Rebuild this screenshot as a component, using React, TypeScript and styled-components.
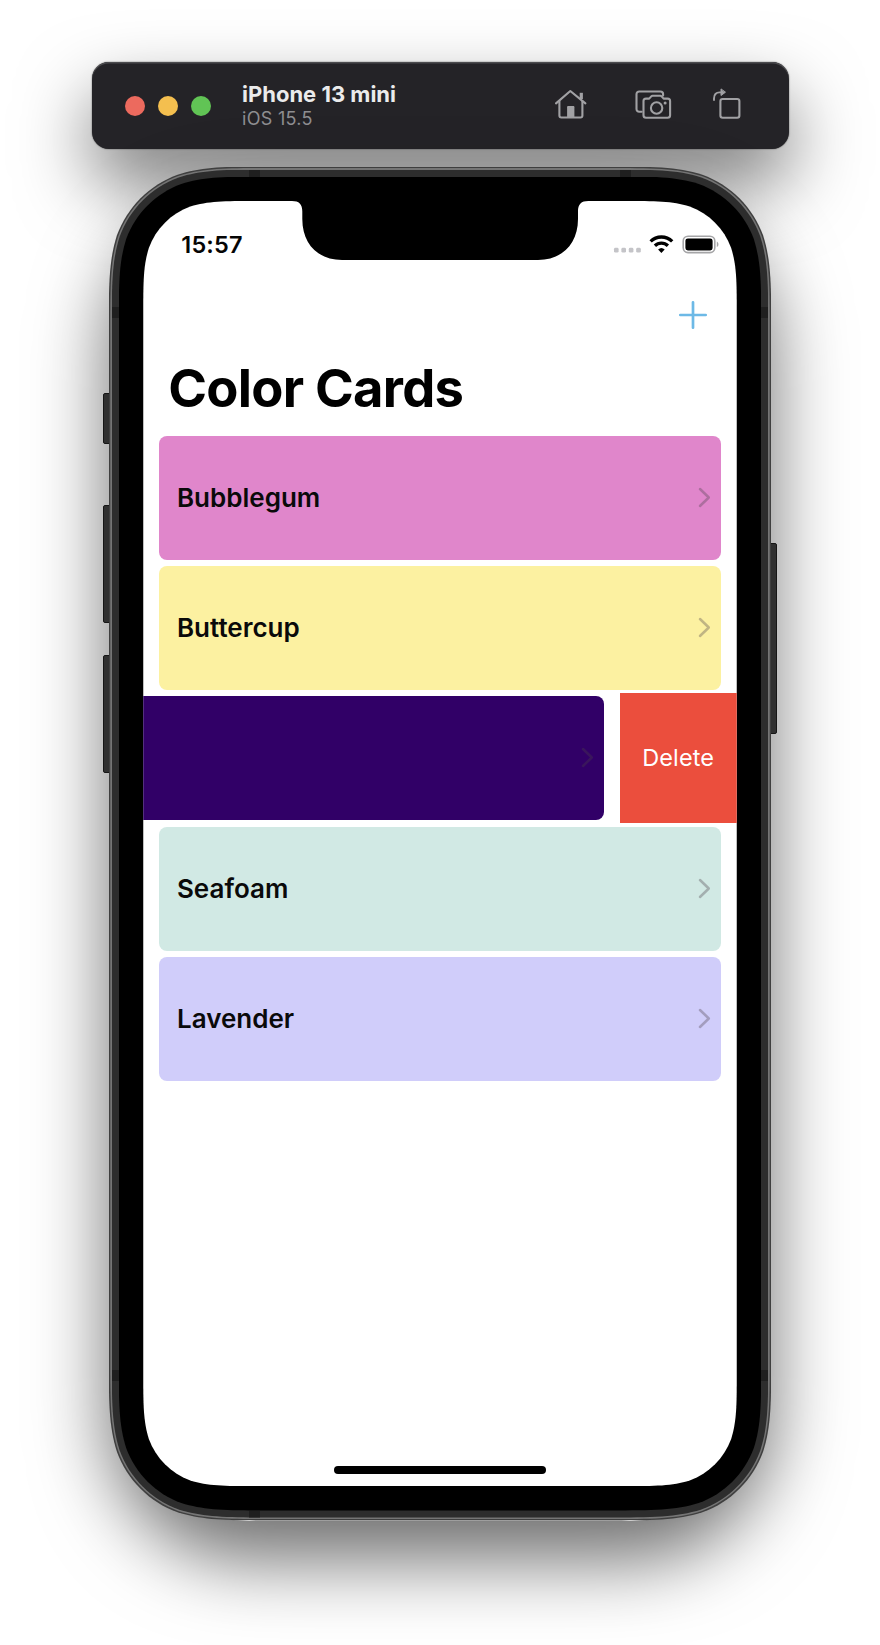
import React from "react";
import styled, { createGlobalStyle } from "styled-components";

/** Rounded rectangle with continuous-curvature corners, as a CSS path. */
function smoothRect(w: number, h: number, r: number): string {
  const a = 1.528665 * r;
  const b = 1.088493 * r;
  const c = 0.868407 * r;
  const d = 0.631494 * r;
  const e = 0.074911 * r;
  const f = 0.372824 * r;
  const g = 0.16906 * r;
  return [
    `M${a} 0 L${w - a} 0`,
    `C${w - b} 0 ${w - c} 0 ${w - d} ${e}`,
    `C${w - f} ${g} ${w - g} ${f} ${w - e} ${d}`,
    `C${w} ${c} ${w} ${b} ${w} ${a}`,
    `L${w} ${h - a}`,
    `C${w} ${h - b} ${w} ${h - c} ${w - e} ${h - d}`,
    `C${w - g} ${h - f} ${w - f} ${h - g} ${w - d} ${h - e}`,
    `C${w - c} ${h} ${w - b} ${h} ${w - a} ${h}`,
    `L${a} ${h}`,
    `C${b} ${h} ${c} ${h} ${d} ${h - e}`,
    `C${f} ${h - g} ${g} ${h - f} ${e} ${h - d}`,
    `C0 ${h - c} 0 ${h - b} 0 ${h - a}`,
    `L0 ${a}`,
    `C0 ${b} 0 ${c} ${e} ${d}`,
    `C${g} ${f} ${f} ${g} ${d} ${e}`,
    `C${c} 0 ${b} 0 ${a} 0 Z`,
  ].join(" ");
}

const PHONE_W = 662.5;
const PHONE_H = 1354;
const PHONE_R = 109;

const GlobalStyle = createGlobalStyle`
  body {
    margin: 0;
    background: #fff;
    font-family: Inter, "Liberation Sans", sans-serif;
  }
  * { box-sizing: border-box; }
`;

const Page = styled.main`
  height: 1645px;
  overflow: hidden;
  display: flex;
  flex-direction: column;
  align-items: center;
  padding-top: 62px;
`;

const TitleBar = styled.header`
  width: 697px;
  height: 87px;
  flex: none;
  border-radius: 17px;
  background: #242327;
  box-shadow: 0 34px 72px rgba(0, 0, 0, 0.52), 0 0 1.5px rgba(0, 0, 0, 0.7),
    inset 0 1.5px 0.5px #4b4b4e;
  display: flex;
  align-items: center;
  padding: 0 46.5px 0 33.5px;
`;

const Lights = styled.div`
  display: flex;
  gap: 13px;
  width: 117px;
`;

const Light = styled.span<{ $color: string }>`
  width: 20px;
  height: 20px;
  border-radius: 50%;
  background: ${(p) => p.$color};
`;

const DeviceInfo = styled.div`
  flex: 1;
  display: flex;
  flex-direction: column;
  padding-top: 2px;
`;

const DeviceName = styled.div`
  font-size: 22px;
  line-height: 25px;
  font-weight: 700;
  letter-spacing: 0;
  color: #ebebec;
`;

const DeviceOs = styled.div`
  font-size: 18px;
  line-height: 24px;
  letter-spacing: 0.3px;
  color: #8e8e91;
`;

const Tools = styled.div`
  display: flex;
  align-items: center;
  padding-bottom: 4px;
  gap: 46px;
  color: #a1a1a4;
  svg { display: block; }
  svg:last-child { margin-left: -6px; }
`;

const Phone = styled.section`
  position: relative;
  flex: none;
  margin-top: 17.5px;
  width: ${PHONE_W}px;
  height: ${PHONE_H}px;
  border-radius: 140px;
  box-shadow: 0 39px 76px rgba(0, 0, 0, 0.57);
`;

const Shell = styled.div<{ $inset: number; $pad: number; $color: string }>`
  position: relative;
  padding: ${(p) => p.$pad}px;
  height: ${(p) => PHONE_H - 2 * p.$inset}px;
  background: ${(p) => p.$color};
  clip-path: path("${(p) =>
    smoothRect(PHONE_W - 2 * p.$inset, PHONE_H - 2 * p.$inset, PHONE_R - p.$inset)}");
`;

const SideButton = styled.span<{ $side: "left" | "right"; $top: number; $height: number }>`
  position: absolute;
  ${(p) => p.$side}: -6px;
  top: ${(p) => p.$top}px;
  width: 9px;
  height: ${(p) => p.$height}px;
  border-radius: 2px;
  border: 1px solid #161616;
  background: #303030;
`;

const Antenna = styled.span<{ $x: "left" | "right"; $y: "top" | "bottom"; $dx: number; $dy: number; $upright?: boolean }>`
  position: absolute;
  ${(p) => p.$x}: ${(p) => p.$dx}px;
  ${(p) => p.$y}: ${(p) => p.$dy}px;
  width: ${(p) => (p.$upright ? 7 : 11)}px;
  height: ${(p) => (p.$upright ? 11 : 7)}px;
  background: #1f1f1f;
`;

const Screen = styled(Shell)`
  display: flex;
  flex-direction: column;
`;

const Notch = styled.svg`
  position: absolute;
  left: 148.5px;
  top: 0;
`;

const StatusBar = styled.div`
  height: 86px;
  padding: 28.5px 18px 0 38px;
  display: flex;
  justify-content: space-between;
  align-items: flex-start;
`;

const Clock = styled.time`
  font-size: 23.5px;
  line-height: 30px;
  font-weight: 600;
  letter-spacing: 0.2px;
  color: #050505;
`;

const StatusGlyphs = styled.svg`
  margin-top: 2px;
`;

const NavBar = styled.nav`
  height: 62px;
  display: flex;
  justify-content: flex-end;
  padding: 13.2px 28.5px 0 0;
`;

const AddButton = styled.button`
  width: 30px;
  height: 30px;
  padding: 0;
  border: 0;
  background: none;
  color: #6db9e6;
`;

const Heading = styled.h1`
  margin: 0;
  height: 83.4px;
  padding: 8.5px 0 0 25px;
  font-size: 52.5px;
  line-height: 60px;
  font-weight: 700;
  letter-spacing: -0.75px;
  color: #000;
`;

const CardList = styled.ul`
  list-style: none;
  margin: 0;
  padding: 0;
  flex: 1;
`;

const Row = styled.li`
  height: 130.4px;
  display: flex;
  justify-content: flex-end;
  overflow: hidden;
`;

const Card = styled.div<{ $color: string }>`
  flex: none;
  width: 561.5px;
  margin: 3.2px 15.8px 3.2px;
  padding: 0 9.5px 0 17.5px;
  border-radius: 8px;
  background: ${(p) => p.$color};
  display: flex;
  align-items: center;
  justify-content: space-between;
`;

const CardName = styled.span`
  font-size: 26px;
  line-height: 32px;
  font-weight: 600;
  letter-spacing: 0;
  color: #0a0a0a;
`;

const DeleteAction = styled.button`
  flex: none;
  width: 117.2px;
  margin-bottom: 1px;
  padding: 1px 0 0;
  border: 0;
  background: #eb4e3d;
  color: #fff;
  font: 400 23.5px/30px Inter, "Liberation Sans", sans-serif;
  letter-spacing: 0.1px;
`;

const HomeIndicator = styled.div`
  align-self: center;
  width: 212.5px;
  height: 8.3px;
  margin-bottom: 12px;
  border-radius: 5px;
  background: #000;
`;

const StatusIcons = () => (
  <StatusGlyphs width="108" height="24" viewBox="0 0 108 24">
    <g fill="#c4c4c8">
      {[3, 10.4, 17.8, 25.2].map((x) => (
        <rect key={x} x={x} y="15.8" width="4.6" height="4.8" rx="1.4" />
      ))}
    </g>
    <g fill="none" stroke="#000" strokeWidth="3.3">
      <path d="M39.6 9.4a15.4 15.4 0 0 1 21.6 0" />
      <path d="M43.9 13.7a9.3 9.3 0 0 1 13 0" />
    </g>
    <path d="M50.4 20.9l-3.3-3.5a4.9 4.9 0 0 1 6.6 0z" fill="#000" />
    <rect x="72.2" y="4.2" width="31.6" height="16.4" rx="4.8" fill="none" stroke="#a5a5a7" strokeWidth="1.6" />
    <rect x="74.4" y="6.4" width="27.2" height="12" rx="2.4" fill="#000" />
    <path d="M105.8 9.6c2.2 1 2.2 4.6 0 5.6z" fill="#a5a5a7" />
  </StatusGlyphs>
);

const HomeIcon = () => (
  <svg width="34" height="32" viewBox="0 0 34 32" fill="none" stroke="currentColor" strokeWidth="2.1" strokeLinecap="round" strokeLinejoin="round">
    <path d="M2 15.4 16.3 3 31.4 15.4" />
    <path d="M5.4 13.2v14.4c0 1.2.7 1.9 1.9 1.9h19.2c1.2 0 1.9-.7 1.9-1.9V13.2" />
    <path d="M27.3 11V4.8" strokeWidth="3.2" strokeLinecap="butt" />
    <path d="M13.1 29V19.3c0-.8.4-1.2 1.2-1.2h4.9c.8 0 1.2.4 1.2 1.2V29z" fill="currentColor" stroke="none" />
  </svg>
);

const ScreenshotIcon = () => (
  <svg width="38" height="32" viewBox="0 0 38 32" fill="none" stroke="currentColor" strokeWidth="2.1" strokeLinecap="round" strokeLinejoin="round">
    <path d="M7.6 23.8H5.2c-1.6 0-2.7-1.1-2.7-2.7V6.2c0-1.6 1.1-2.7 2.7-2.7h21.2c1.6 0 2.7 1.1 2.7 2.7v1.2" />
    <path d="M12 10.6h3.2l2-2.2c.4-.4.8-.6 1.3-.6h7.8c.5 0 .9.2 1.3.6l2 2.2h4c1.5 0 2.5 1 2.5 2.5v14.2c0 1.5-1 2.5-2.5 2.5H12c-1.5 0-2.5-1-2.5-2.5V13.1c0-1.5 1-2.5 2.5-2.5z" />
    <circle cx="22.6" cy="20" r="5.7" />
    <circle cx="31.1" cy="15.1" r="1.5" fill="currentColor" stroke="none" />
  </svg>
);

const RotateIcon = () => (
  <svg width="30" height="34" viewBox="0 0 30 34" fill="none" stroke="currentColor" strokeWidth="2.1" strokeLinecap="round" strokeLinejoin="round">
    <rect x="8.4" y="12" width="19" height="18.7" rx="2.2" />
    <path d="M2 13.7V11.5c0-3.9 2-6.1 5.6-6.1h1.6" strokeWidth="1.9" strokeLinecap="butt" />
    <path d="M9 2.3v6.2l4.2-3.1z" fill="currentColor" strokeWidth="1" />
  </svg>
);

const Chevron = () => (
  <svg width="13" height="22" viewBox="0 0 13 22" fill="none" stroke="#4c404a" strokeOpacity="0.34" strokeWidth="2.5" strokeLinecap="round" strokeLinejoin="round">
    <path d="M2 2 10.8 10.5 2 19" />
  </svg>
);

const cards = [
  { name: "Bubblegum", color: "#e086cb" },
  { name: "Buttercup", color: "#fcf1a1" },
  { name: "", color: "#310067", deleting: true },
  { name: "Seafoam", color: "#d1e9e4" },
  { name: "Lavender", color: "#d0cdfa" },
];

export default function App() {
  return (
    <Page>
      <GlobalStyle />
      <TitleBar>
        <Lights>
          <Light $color="#ec6a5e" />
          <Light $color="#f4bf4f" />
          <Light $color="#61c455" />
        </Lights>
        <DeviceInfo>
          <DeviceName>iPhone 13 mini</DeviceName>
          <DeviceOs>iOS 15.5</DeviceOs>
        </DeviceInfo>
        <Tools>
          <HomeIcon />
          <ScreenshotIcon />
          <RotateIcon />
        </Tools>
      </TitleBar>

      <Phone>
        <SideButton $side="left" $top={226} $height={51.5} />
        <SideButton $side="left" $top={338} $height={118} />
        <SideButton $side="left" $top={488} $height={118} />
        <SideButton $side="right" $top={376} $height={191.5} />
        <Shell $inset={0} $pad={1.5} $color="#3f3f3f">
          <Shell $inset={1.5} $pad={1.5} $color="#757575">
            <Shell $inset={3} $pad={7} $color="#2d2d2d">
              <Antenna $x="left" $y="top" $dx={137} $dy={0} />
              <Antenna $x="right" $y="top" $dx={137} $dy={0} />
              <Antenna $x="left" $y="bottom" $dx={137} $dy={0} />
              <Antenna $x="left" $y="top" $dx={0} $dy={137} $upright />
              <Antenna $x="right" $y="top" $dx={0} $dy={137} $upright />
              <Antenna $x="left" $y="bottom" $dx={0} $dy={137} $upright />
              <Antenna $x="right" $y="bottom" $dx={0} $dy={137} $upright />
              <Shell $inset={10} $pad={24.5} $color="#000">
                <Screen $inset={34.5} $pad={0} $color="#fff">
                  <Notch width="297" height="60" viewBox="0 0 297 60">
                    <path d="M0 0C7 0 10.3 3 10.3 10.5V18C10.3 43 26 59 50 59H246C270 59 286 43 286 18V10.5C286 3 289.3 0 296.3 0Z" />
                  </Notch>
                  <StatusBar>
                    <Clock>15:57</Clock>
                    <StatusIcons />
                  </StatusBar>
                  <NavBar>
                    <AddButton aria-label="Add">
                      <svg width="30" height="30" viewBox="0 0 30 30" stroke="currentColor" strokeWidth="2.7" strokeLinecap="round">
                        <path d="M15 2.3V27.7M2.3 15H27.7" />
                      </svg>
                    </AddButton>
                  </NavBar>
                  <Heading>Color Cards</Heading>
                  <CardList>
                    {cards.map((card) => (
                      <Row key={card.color}>
                        <Card $color={card.color}>
                          <CardName>{card.name}</CardName>
                          <Chevron />
                        </Card>
                        {card.deleting && <DeleteAction>Delete</DeleteAction>}
                      </Row>
                    ))}
                  </CardList>
                  <HomeIndicator />
                </Screen>
              </Shell>
            </Shell>
          </Shell>
        </Shell>
      </Phone>
    </Page>
  );
}
